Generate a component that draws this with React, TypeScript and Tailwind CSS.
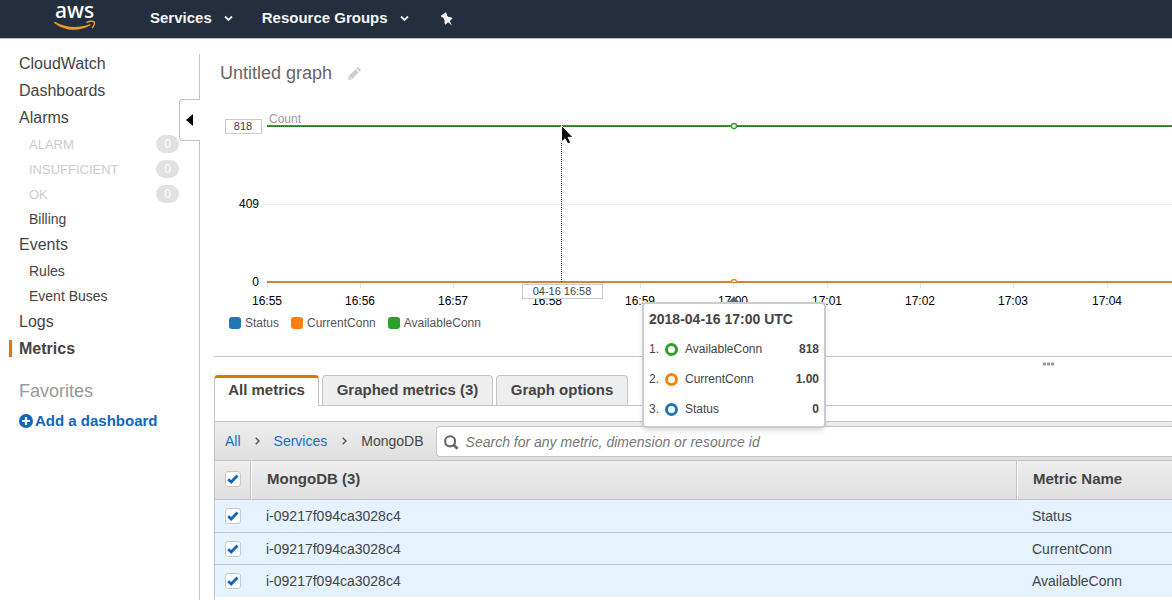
import React from "react";

interface NavItem {
  name: string;
  level: "top" | "sub" | "state";
  count?: number;
  active?: boolean;
}

interface Series {
  name: string;
  value: string;
  fill: string;
  ring: string;
}

interface Metric {
  id: string;
  metricName: string;
}

const navItems: NavItem[] = [
  { name: "CloudWatch", level: "top" },
  { name: "Dashboards", level: "top" },
  { name: "Alarms", level: "top" },
  { name: "ALARM", level: "state", count: 0 },
  { name: "INSUFFICIENT", level: "state", count: 0 },
  { name: "OK", level: "state", count: 0 },
  { name: "Billing", level: "sub" },
  { name: "Events", level: "top" },
  { name: "Rules", level: "sub" },
  { name: "Event Buses", level: "sub" },
  { name: "Logs", level: "top" },
  { name: "Metrics", level: "top", active: true },
];

const series: Series[] = [
  { name: "Status", value: "0", fill: "bg-[#1f77b4]", ring: "border-[#1f77b4]" },
  { name: "CurrentConn", value: "1.00", fill: "bg-[#ff7f0e]", ring: "border-[#ff7f0e]" },
  { name: "AvailableConn", value: "818", fill: "bg-[#2ca02c]", ring: "border-[#2ca02c]" },
];

const metrics: Metric[] = [
  { id: "i-09217f094ca3028c4", metricName: "Status" },
  { id: "i-09217f094ca3028c4", metricName: "CurrentConn" },
  { id: "i-09217f094ca3028c4", metricName: "AvailableConn" },
];

const ticks = [
  { x: 53, label: "16:55" },
  { x: 146, label: "16:56" },
  { x: 239, label: "16:57" },
  { x: 333, label: "16:58" },
  { x: 426, label: "16:59" },
  { x: 519, label: "17:00" },
  { x: 613, label: "17:01" },
  { x: 706, label: "17:02" },
  { x: 799, label: "17:03" },
  { x: 893, label: "17:04" },
];

const AwsLogo = () => (
  <svg width="44" height="34" viewBox="0 0 44 34" role="img" aria-label="aws">
    <text x="2" y="18" fontSize="21" fill="#fff" className="font-['Noto_Sans',sans-serif] font-medium">
      aws
    </text>
    <path d="M1 22c.300-.500.800-.400 1.300-.100C12.500 27.600 25 28.700 36.700 24.300c.900-.300 1.300.500.600 1C26.500 32 11 31 1.300 22.900c-.300-.300-.500-.500-.300-.900z" fill="#f7981f" />
    <path d="M33.500 22.600c2.300-1.400 5.600-1.600 7.800-.900.700 1.600-.700 4.900-2.400 6.400" fill="none" stroke="#f7981f" strokeWidth="1.400" />
  </svg>
);

const Chevron = () => (
  <svg width="9" height="7" viewBox="0 0 9 7" aria-hidden="true">
    <path d="M1 1.500l3.500 3.500L8 1.500" fill="none" stroke="#eee" strokeWidth="1.800" />
  </svg>
);

const TopBar = () => (
  <header className="flex h-[39px] items-center border-b border-[#b9b9bf] bg-[#232f3e] pb-px text-[15px] font-bold text-[#f4f4f4]">
    <a href="#" className="-mt-[3px] ml-[53px]">
      <AwsLogo />
    </a>
    <button className="ml-[53px] flex items-center gap-3">
      Services
      <Chevron />
    </button>
    <button className="ml-[29px] flex items-center gap-3">
      Resource Groups
      <Chevron />
    </button>
    <button className="ml-[31px]" aria-label="Pin shortcuts">
      <svg width="14" height="14" viewBox="0 0 14 14" aria-hidden="true">
        <path d="M.800 3.800L5.800.300l1.400 2.100-.700.700 2 1.900c1.500-.300 2.900.200 4 1.200L9.800 8.900l2.100 4.600-3.800-3.300-2.700 2.500C4.500 11.400 4.200 10 4.700 8.500L3 5.200l-1.200.300z" fill="#f0f0f0" />
      </svg>
    </button>
  </header>
);

const Sidebar = () => (
  <aside className="relative mt-[15px] w-[200px] shrink-0 border-r border-[#c4c4c4]">
    <nav className="-mt-0.5">
      {navItems.map((item) => (
        <div key={item.name} className={item.level === "top" ? "pb-[5px]" : "pb-[3px]"}>
          <div
            className={`flex h-[22px] items-center justify-between pr-5 ${
              item.level === "top" ? "pt-0.5 pl-[19px] text-base" : item.level === "sub" ? "pl-[29px] text-sm" : "pl-[29px] text-[13px]"
            }`}
          >
            <a
              href="#"
              className={
                item.active
                  ? "relative font-bold text-[#444] before:absolute before:top-[3px] before:-left-2.5 before:h-[17px] before:w-[3px] before:bg-[#e07700]"
                  : item.level === "state"
                    ? "pt-0.5 text-[#ccc]"
                    : "text-[#444]"
              }
            >
              {item.name}
            </a>
            {item.count !== undefined && (
              <span className="flex h-[18px] w-[23px] items-center justify-center rounded-full bg-[#e1e1e1] text-xs text-white">
                {item.count}
              </span>
            )}
          </div>
        </div>
      ))}
    </nav>
    <h2 className="mt-[15px] pl-[19px] text-lg leading-6 text-[#999]">Favorites</h2>
    <a href="#" className="mt-[7px] flex items-center gap-0.5 pl-[19px] text-[15px] leading-[22px] font-bold text-[#1166bb]">
      <svg width="14" height="14" viewBox="0 0 14 14" aria-hidden="true">
        <circle cx="7" cy="7" r="7" fill="#1166bb" />
        <path d="M7 3v8M3 7h8" stroke="#fff" strokeWidth="2.200" />
      </svg>
      Add a dashboard
    </a>
    <button
      aria-label="Collapse navigation"
      className="absolute top-[45px] -right-px flex h-[42px] w-[21px] items-center rounded-l border border-r-0 border-[#c4c4c4] bg-white pb-px pl-1.5"
    >
      <svg width="8" height="12" viewBox="0 0 8 12" aria-hidden="true">
        <path d="M0 6L7 0v12z" fill="#000" />
      </svg>
    </button>
  </aside>
);

const Chart = () => (
  <svg width="100%" height="216" className="block font-['Liberation_Sans',Arial,sans-serif] text-xs" role="img" aria-label="Count of connections over time">
    <line x1="48" x2="100%" y1="110.500" y2="110.500" stroke="#eee" />
    <path d="M48 188.500h5M48 32.500h5" stroke="#eee" />
    <text x="55" y="29" fill="#999">Count</text>
    <text x="45" y="114" textAnchor="end">409</text>
    <text x="45" y="192" textAnchor="end">0</text>
    {ticks.map((tick) => (
      <g key={tick.label}>
        <path d={`M${tick.x + 0.5} 189v5`} stroke="#e3e3e3" />
        <text x={tick.x} y="211" textAnchor="middle">{tick.label}</text>
      </g>
    ))}
    <line x1="53" x2="100%" y1="32" y2="32" stroke="#2ca02c" strokeWidth="2" />
    <line x1="53" x2="100%" y1="32.500" y2="32.500" stroke="#333" strokeDasharray="1 1" opacity="0.6" />
    <line x1="53" x2="100%" y1="188" y2="188" stroke="#d4823a" strokeWidth="2" />
    <line x1="347.500" x2="347.500" y1="33" y2="188" stroke="#333" strokeDasharray="1 1" />
    <circle cx="520" cy="32" r="2.500" fill="#fff" stroke="#2ca02c" strokeWidth="1.300" />
    <path d="M517.500 188a2.500 2.500 0 0 1 5 0" fill="#fff" stroke="#ff7f0e" strokeWidth="1.300" />
    <rect x="11.500" y="25.500" width="36" height="14" fill="#fff" stroke="#ccc" />
    <text x="29" y="36" textAnchor="middle" fill="#444" className="text-[11px]">818</text>
    <rect x="308.500" y="190.500" width="80" height="14" fill="#fff" stroke="#ccc" />
    <text x="348" y="201" textAnchor="middle" fill="#444" className="text-[11px]">04-16 16:58</text>
    <path d="M515 208l5-6 5 6z" fill="#666" />
    <path d="M347.500 31.500v16.500l3.600-3.300 2.700 5.300 3-1.400-2.700-5.200h5z" fill="#111" stroke="#fff" />
  </svg>
);

const Tooltip = () => (
  <div className="absolute top-[263px] left-[428px] z-20 w-[184px] rounded border-2 border-[#ccc] bg-white px-[5px] pt-[5px] pb-0.5 text-xs text-[#444] shadow-md">
    <p className="text-sm leading-5 font-bold">2018-04-16 17:00 UTC</p>
    <ul className="pt-[5px]">
      {[...series].reverse().map((item, index) => (
        <li key={item.name} className="flex h-[30px] items-center">
          <span className="w-4">{index + 1}.</span>
          <span className={`size-[13px] rounded-full border-[3px] ${item.ring}`} />
          <span className="ml-[7px] flex-1">{item.name}</span>
          <span className="font-bold">{item.value}</span>
        </li>
      ))}
    </ul>
  </div>
);

const Graph = () => (
  <section className="relative border-b border-[#c4c4c4]">
    <div className="flex h-[55px] items-start gap-4 pt-[22px] pl-1.5">
      <h1 className="text-lg leading-6 text-[#666]">Untitled graph</h1>
      <button aria-label="Rename graph" className="mt-1.5">
        <svg width="13" height="13" viewBox="0 0 13 13" aria-hidden="true">
          <path d="M0 13l.800-4L7.500 2.300l3.200 3.200L4 12.200zM8.300 1.500l1-1c.400-.400.900-.400 1.300 0l1.900 1.900c.400.400.400.900 0 1.300l-1 1z" fill="#ccc" />
          <path d="M1.500 9.500l2 2" stroke="#fff" />
        </svg>
      </button>
    </div>
    <Chart />
    <ul className="flex h-[46px] items-start gap-3 pt-1.5 pl-[15px] text-xs leading-[14px] text-[#555]">
      {series.map((item) => (
        <li key={item.name} className="flex items-center gap-1">
          <span className={`size-3 rounded-[3px] ${item.fill}`} />
          {item.name}
        </li>
      ))}
    </ul>
    <Tooltip />
  </section>
);

const Tabs = () => (
  <div role="tablist" className="flex gap-[3px] text-[15px] font-bold text-[#444]">
    <button role="tab" aria-selected="true" className="relative z-10 -mb-px h-[31px] w-[105px] rounded-t border border-t-[3px] border-b-0 border-[#c4c4c4] border-t-[#e07700] bg-white pb-1">
      All metrics
    </button>
    <button role="tab" aria-selected="false" className="h-[30px] w-[171px] rounded-t border border-b-0 border-[#c4c4c4] bg-[#eee]">
      Graphed metrics (3)
    </button>
    <button role="tab" aria-selected="false" className="h-[30px] w-[132px] rounded-t border border-b-0 border-[#c4c4c4] bg-[#eee]">
      Graph options
    </button>
  </div>
);

const Separator = () => (
  <svg width="5" height="8" viewBox="0 0 5 8" aria-hidden="true">
    <path d="M.700.700L4 4 .700 7.300" fill="none" stroke="#555" strokeWidth="1.400" />
  </svg>
);

const SearchBar = () => (
  <div className="flex h-[39px] items-center border-t border-[#c4c4c4] bg-linear-to-b from-[#eee] to-[#dfdfdf] pl-2.5 text-sm text-[#444]">
    <nav aria-label="Breadcrumb" className="flex w-[211px] shrink-0 items-center">
      <a href="#" className="text-[#146ec8]">All</a>
      <span className="ml-[14px]"><Separator /></span>
      <a href="#" className="ml-[14px] text-[#146ec8]">Services</a>
      <span className="ml-[15px]"><Separator /></span>
      <span className="ml-[14px]">MongoDB</span>
    </nav>
    <label className="flex h-[31px] flex-1 items-center gap-[7px] rounded-l border border-r-0 border-[#c4c4c4] bg-white pt-0.5 pl-[7px]">
      <svg width="15" height="15" viewBox="0 0 15 15" aria-hidden="true">
        <circle cx="6.300" cy="6.300" r="5.200" fill="none" stroke="#666" strokeWidth="2.200" />
        <path d="M10 10l4 4" stroke="#666" strokeWidth="2.800" />
      </svg>
      <input
        type="text"
        aria-label="Search metrics"
        placeholder="Search for any metric, dimension or resource id"
        className="w-full bg-transparent italic outline-none placeholder:text-[#777]"
      />
    </label>
  </div>
);

const Checkbox = ({ label }: { label: string }) => (
  <span className="relative block size-4">
    <input type="checkbox" defaultChecked aria-label={label} className="block size-4 appearance-none rounded-[3px] border border-[#c8c8c8] bg-white" />
    <svg width="12" height="10" viewBox="0 0 12 10" className="pointer-events-none absolute top-[3px] left-0.5" aria-hidden="true">
      <path d="M1.200 5.200l3 2.800L10.500 1.500" fill="none" stroke="#1166bb" strokeWidth="2.800" />
    </svg>
  </span>
);

const MetricsTable = () => (
  <table className="w-full table-fixed border-separate border-spacing-0 text-sm text-[#444]">
    <thead>
      <tr className="h-10 bg-linear-to-b from-[#eee] to-[#dfdfdf] text-left text-[15px]">
        <th className="w-9 border-y border-r border-[#c4c4c4] pb-0.5 pl-2.5">
          <Checkbox label="Select all" />
        </th>
        <th className="border-y border-r border-l border-[#c4c4c4] border-l-white pb-0.5 pl-[15px]">MongoDB (3)</th>
        <th className="w-[155px] border-y border-l border-[#c4c4c4] border-l-white pb-0.5 pl-[15px]">Metric Name</th>
      </tr>
    </thead>
    <tbody>
      {metrics.map((metric) => (
        <tr key={metric.metricName} className="group h-8 bg-[#e5f2ff] first:h-[33px]">
          <td className="border-b border-[#c4c4c4] pl-2.5 group-last:border-b-0">
            <Checkbox label={`Select ${metric.metricName}`} />
          </td>
          <td className="border-b border-[#c4c4c4] pl-[15px] group-last:border-b-0">{metric.id}</td>
          <td className="border-b border-[#c4c4c4] pl-[15px] group-last:border-b-0">{metric.metricName}</td>
        </tr>
      ))}
    </tbody>
  </table>
);

const App: React.FC = () => {
  return (
    <div className="flex min-h-screen flex-col bg-white font-['Liberation_Sans',Arial,sans-serif]">
      <TopBar />
      <div className="flex flex-1">
        <Sidebar />
        <main className="ml-[14px] flex min-w-0 flex-1 flex-col">
          <Graph />
          <div className="flex h-[18px] justify-end pt-[5px] pr-[117px]">
            <svg width="12" height="4" viewBox="0 0 12 4" aria-hidden="true">
              <path d="M0 .500h3v3H0zM4 .500h3v3H4zM8 .500h3v3H8z" fill="#999" />
            </svg>
          </div>
          <Tabs />
          <div className="flex-1 border-t border-l border-[#c4c4c4] pt-[15px]">
            <SearchBar />
            <MetricsTable />
          </div>
        </main>
      </div>
    </div>
  );
};

export default App;
